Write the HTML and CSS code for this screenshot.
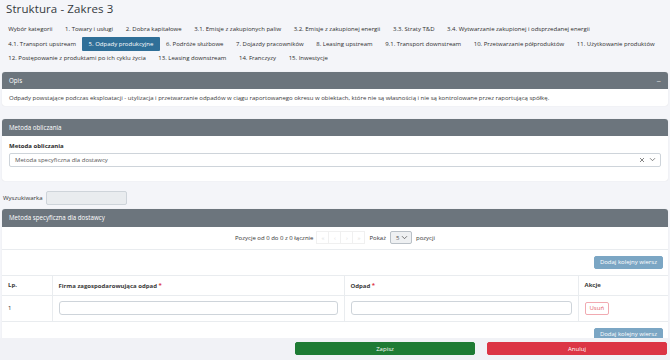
FILE: index.html
```html
<!DOCTYPE html>
<html lang="pl">
<head>
<meta charset="utf-8">
<title>Struktura - Zakres 3</title>
<link rel="stylesheet" href="styles.css">
</head>
<body>
<div class="page">
  <h1 class="title">Struktura - Zakres 3</h1>
  <ul class="tabs">
    <li class="tab">Wybór kategorii</li>
    <li class="tab">1. Towary i usługi</li>
    <li class="tab">2. Dobra kapitałowe</li>
    <li class="tab">3.1. Emisje z zakupionych paliw</li>
    <li class="tab">3.2. Emisje z zakupionej energii</li>
    <li class="tab">3.3. Straty T&amp;D</li>
    <li class="tab">3.4. Wytwarzanie zakupionej i odsprzedanej energii</li>
    <li class="break"></li>
    <li class="tab">4.1. Transport upstream</li>
    <li class="tab active">5. Odpady produkcyjne</li>
    <li class="tab">6. Podróże służbowe</li>
    <li class="tab">7. Dojazdy pracowników</li>
    <li class="tab">8. Leasing upstream</li>
    <li class="tab">9.1. Transport downstream</li>
    <li class="tab">10. Przetwarzanie półproduktów</li>
    <li class="tab">11. Użytkowanie produktów</li>
    <li class="break"></li>
    <li class="tab">12. Postępowanie z produktami po ich cyklu życia</li>
    <li class="tab">13. Leasing downstream</li>
    <li class="tab">14. Franczyzy</li>
    <li class="tab">15. Inwestycje</li>
  </ul>

  <section class="panel panel-opis">
    <div class="panel-head"><span>Opis</span><span class="collapse">&minus;</span></div>
    <div class="panel-body opis-body">Odpady powstające podczas eksploatacji - utylizacja i przetwarzanie odpadów w ciągu raportowanego okresu w obiektach, które nie są własnością i nie są kontrolowane przez raportującą spółkę.</div>
  </section>

  <section class="panel panel-metoda">
    <div class="panel-head"><span>Metoda obliczania</span></div>
    <div class="panel-body metoda-body">
      <div class="label-bold">Metoda obliczania</div>
      <div class="select">
        <span>Metoda specyficzna dla dostawcy</span>
        <span class="select-icons">
          <svg width="6" height="6" viewBox="0 0 6 6"><path d="M1 1L5 5M5 1L1 5" stroke="#666" stroke-width="0.8" fill="none"/></svg>
          <svg width="7" height="5" viewBox="0 0 7 5"><path d="M1 1.2L3.5 3.7L6 1.2" stroke="#666" stroke-width="0.8" fill="none"/></svg>
        </span>
      </div>
    </div>
  </section>

  <div class="search">
    <span class="search-label">Wyszukiwarka</span>
    <span class="search-input"></span>
  </div>

  <section class="panel panel-table">
    <div class="panel-head tall"><span>Metoda specyficzna dla dostawcy</span></div>
    <div class="panel-body table-body">
      <div class="pager">
        <span class="pager-info">Pozycje od 0 do 0 z 0 łącznie</span>
        <span class="pager-btns">
          <span class="pbtn">&laquo;</span><span class="pbtn">&lsaquo;</span><span class="pbtn">&rsaquo;</span><span class="pbtn">&raquo;</span>
        </span>
        <span class="pager-show">Pokaż</span>
        <span class="small-select"><span>5</span><svg width="7" height="5" viewBox="0 0 7 5"><path d="M1 1.2L3.5 3.7L6 1.2" stroke="#555" stroke-width="0.8" fill="none"/></svg></span>
        <span class="pager-show">pozycji</span>
      </div>
      <div class="add-row"><button class="btn-add">Dodaj kolejny wiersz</button></div>
      <table class="grid">
        <thead>
          <tr>
            <th class="c-lp">Lp.</th>
            <th class="c-firma">Firma zagospodarowująca odpad <span class="req">*</span></th>
            <th class="c-odpad">Odpad <span class="req">*</span></th>
            <th class="c-akcje">Akcje</th>
          </tr>
        </thead>
        <tbody>
          <tr>
            <td class="c-lp">1</td>
            <td class="c-firma"><span class="input"></span></td>
            <td class="c-odpad"><span class="input"></span></td>
            <td class="c-akcje"><button class="btn-del">Usuń</button></td>
          </tr>
        </tbody>
      </table>
      <div class="add-row bottom"><button class="btn-add">Dodaj kolejny wiersz</button></div>
    </div>
  </section>
</div>

<footer class="footer">
  <button class="btn-save">Zapisz</button>
  <button class="btn-cancel">Anuluj</button>
</footer>
</body>
</html>
```

FILE: styles.css
```css
* { box-sizing: border-box; }

body {
  margin: 0;
  background: #f4f5f9;
  font-family: "Open Sans", "DejaVu Sans", sans-serif;
  font-size: 6px;
  color: #333;
}

.page {
  padding: 0 2px 40px;
}

.title {
  margin: 0;
  padding: 1px 0 0 4px;
  height: 22px;
  font-size: 11.5px;
  line-height: 16px;
  font-weight: 400;
  color: #343a40;
  letter-spacing: 0.1px;
}

.tabs {
  list-style: none;
  margin: 0;
  padding: 0;
  display: flex;
  flex-wrap: wrap;
}

.tab {
  height: 14.5px;
  line-height: 14.5px;
  padding: 0 6.3px;
  white-space: nowrap;
  color: #2d2d2d;
}

.tab.active {
  background: #2f6f98;
  color: #fff;
  border-radius: 1px;
}

.break {
  flex-basis: 100%;
  height: 0;
}

.panel {
  background: #fff;
  border-radius: 3px;
  box-shadow: 0 0 1px rgba(0,0,0,0.15);
}

.panel-opis { margin-top: 6.5px; }
.panel-metoda { margin-top: 13px; }

.panel-head {
  background: #6c757d;
  color: #fff;
  height: 17px;
  padding: 0 7px;
  display: flex;
  align-items: center;
  justify-content: space-between;
  border-radius: 3px 3px 0 0;
  font-size: 6.2px;
}

.panel-head.tall { height: 18px; }

.collapse {
  font-size: 8px;
  color: #ddd;
}

.opis-body {
  height: 17px;
  padding: 0 7px;
  display: flex;
  align-items: center;
  color: #3a3a3a;
}

.metoda-body {
  padding: 6px 7px 14px;
}

.label-bold {
  font-weight: 700;
  color: #2b2b2b;
  height: 11px;
  line-height: 9px;
}

.select {
  height: 13.5px;
  border: 1px solid #ced4da;
  border-radius: 2px;
  display: flex;
  align-items: center;
  justify-content: space-between;
  padding: 0 4px 0 5px;
  color: #555;
}

.select-icons {
  display: flex;
  align-items: center;
  gap: 4px;
}

.search {
  display: flex;
  align-items: center;
  margin-top: 10px;
  height: 14px;
}

.search-label {
  width: 44px;
  padding-left: 1px;
  color: #333;
}

.search-input {
  width: 81px;
  height: 14px;
  background: #e9ecef;
  border: 1px solid #ced4da;
  border-radius: 2px;
}

.panel-table {
  margin-top: 4px;
  border-radius: 3px 3px 0 0;
}

.pager {
  height: 23px;
  border-bottom: 1px solid #e9ecef;
  display: flex;
  align-items: center;
  justify-content: center;
  gap: 3px;
  color: #333;
}

.pager-btns {
  display: flex;
  margin: 0 1px;
}

.pbtn {
  width: 13px;
  height: 13px;
  border: 1px solid #f0f0f0;
  margin-left: -1px;
  display: flex;
  align-items: center;
  justify-content: center;
  color: #ddd;
  font-size: 6px;
}

.small-select {
  width: 22px;
  height: 13px;
  border: 1px solid #b9c0c7;
  background: #eef0f2;
  border-radius: 2px;
  display: flex;
  align-items: center;
  justify-content: space-between;
  padding: 0 3px 0 5px;
  color: #555;
  margin: 0 1px;
}

.add-row {
  display: flex;
  justify-content: flex-end;
  padding: 6px 5px 6px 0;
}

.add-row.bottom { padding-top: 6px; }

.btn-add {
  font: inherit;
  font-size: 6px;
  height: 13px;
  padding: 0 5px;
  background: #7ba6c4;
  border: 1px solid #7ba6c4;
  color: #fff;
  border-radius: 2px;
}

.grid {
  width: 100%;
  border-collapse: collapse;
  border-top: 1px solid #e9ecef;
}

.grid th, .grid td {
  text-align: left;
  padding: 0 6px;
  border-bottom: 1px solid #e9ecef;
  border-right: 1px solid #e9ecef;
}

.grid th:last-child, .grid td:last-child { border-right: none; }

.grid th {
  height: 20px;
  font-weight: 700;
  color: #3a3a3a;
}

.grid td { height: 26px; color: #333; }

.c-lp { width: 50px; }
.c-firma { width: 292px; }
.c-odpad { width: 234px; }

.req {
  color: #dc3545;
  font-size: 6px;
  vertical-align: 1px;
}

.input {
  display: block;
  height: 14px;
  border: 1px solid #ced4da;
  border-radius: 3px;
  background: #fff;
}

.btn-del {
  font: inherit;
  font-size: 6px;
  height: 13px;
  padding: 0 4px;
  background: #fff;
  border: 1px solid #f1aab1;
  color: #e35d6a;
  border-radius: 2px;
}

.footer {
  position: fixed;
  left: 0;
  right: 0;
  bottom: 0;
  height: 22px;
  background: #f1f2f6;
  display: flex;
  align-items: center;
  justify-content: flex-end;
  gap: 12px;
  padding: 0 3px 1px 0;
}

.btn-save, .btn-cancel {
  font: inherit;
  font-size: 6px;
  width: 180px;
  height: 13px;
  border-radius: 2px;
  color: #fff;
}

.btn-save { background: #1e7b34; border: 1px solid #1e7b34; }
.btn-cancel { background: #dc3545; border: 1px solid #dc3545; }
```
